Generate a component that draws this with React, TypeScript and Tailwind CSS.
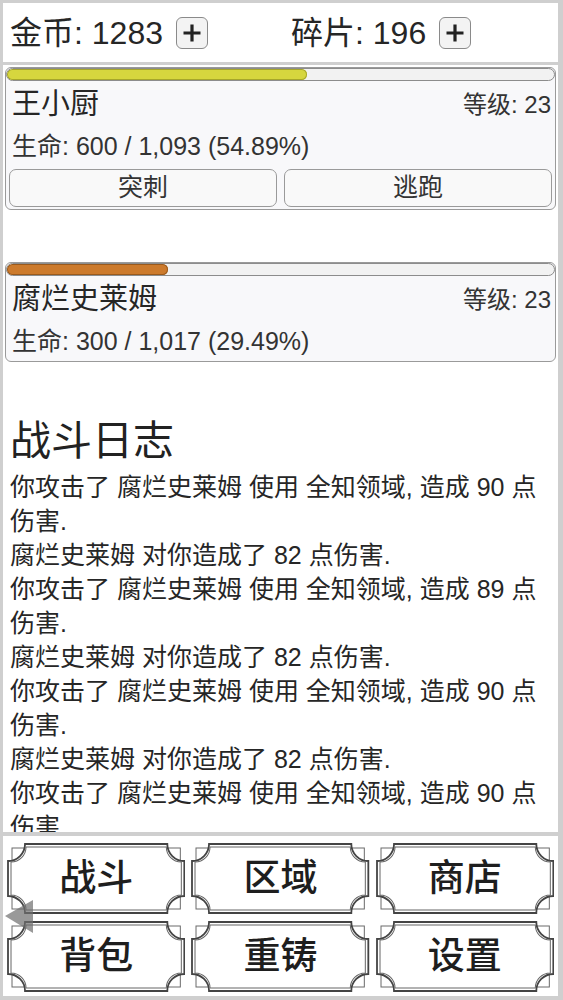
import React from "react";

const FONT = { fontFamily: '"Liberation Sans", "Noto Sans CJK SC", sans-serif' };

function PlusBtn() {
  return (
    <div className="flex h-[32px] w-[32px] items-center justify-center rounded-[6px] border border-[#8a8a8a] bg-[#f3f3f3]">
      <svg width="20" height="20" viewBox="0 0 20 20">
        <path d="M10 1.5 V18.5 M1.5 10 H18.5" stroke="#222" strokeWidth="3.2" />
      </svg>
    </div>
  );
}

function Bar({ pct, fill, edge }: { pct: number; fill: string; edge: string }) {
  return (
    <div className="h-[13px] w-full overflow-hidden rounded-full border border-[#8c8c8c] bg-[#f2f2f2]">
      <div
        className="h-full rounded-full"
        style={{ width: `${pct}%`, background: fill, boxShadow: `inset 0 0 0 1px ${edge}` }}
      />
    </div>
  );
}

function Card({
  name,
  hp,
  pct,
  fill,
  edge,
  buttons,
}: {
  name: string;
  hp: string;
  pct: number;
  fill: string;
  edge: string;
  buttons?: string[];
}) {
  return (
    <div className="mx-[2px] rounded-[6px] border border-[#9a9a9a] bg-[#f8f8fa]">
      <Bar pct={pct} fill={fill} edge={edge} />
      <div className="flex h-[47px] items-center justify-between pl-[6px] pr-[4px]">
        <span className="text-[29px] text-[#262626]">{name}</span>
        <span className="text-[24px] text-[#333]">等级: 23</span>
      </div>
      <div className="flex h-[38px] items-center pl-[6px] text-[25px] text-[#333]">{hp}</div>
      {buttons && (
        <div className="mt-[3px] grid grid-cols-2 gap-[7px] px-[3px] pb-[2px]">
          {buttons.map((b) => (
            <div
              key={b}
              className="flex h-[38px] items-center justify-center rounded-[7px] border border-[#9a9a9a] bg-[#f9f9f9] text-[25px] text-[#333]"
            >
              {b}
            </div>
          ))}
        </div>
      )}
    </div>
  );
}

function scallop(W: number, H: number, d: number, r: number) {
  const x0 = d, y0 = d, x1 = W - d, y1 = H - d;
  return `M ${x0 + r} ${y0} H ${x1 - r} A ${r} ${r} 0 0 0 ${x1} ${y0 + r} V ${y1 - r} A ${r} ${r} 0 0 0 ${x1 - r} ${y1} H ${x0 + r} A ${r} ${r} 0 0 0 ${x0} ${y1 - r} V ${y0 + r} A ${r} ${r} 0 0 0 ${x0 + r} ${y0} Z`;
}

function NavBtn({ label }: { label: string }) {
  const W = 178;
  const H = 71;
  return (
    <div className="relative flex h-[71px] items-center justify-center">
      <svg className="absolute inset-0 h-full w-full" viewBox={`0 0 ${W} ${H}`} preserveAspectRatio="none">
        <rect x="5" y="5" width={W - 10} height={H - 10} fill="none" stroke="#6a6a6a" strokeWidth="1" />
        <path d={scallop(W, H, 1, 17)} fill="#fff" stroke="#444" strokeWidth="1.8" />
        <path d={scallop(W, H, 4, 15)} fill="none" stroke="#666" strokeWidth="1" />
      </svg>
      <span className="relative text-[37px] font-medium text-[#1e1e1e]">{label}</span>
    </div>
  );
}

const LOG: string[] = [
  "你攻击了 腐烂史莱姆 使用 全知领域, 造成 90 点伤害.",
  "腐烂史莱姆 对你造成了 82 点伤害.",
  "你攻击了 腐烂史莱姆 使用 全知领域, 造成 89 点伤害.",
  "腐烂史莱姆 对你造成了 82 点伤害.",
  "你攻击了 腐烂史莱姆 使用 全知领域, 造成 90 点伤害.",
  "腐烂史莱姆 对你造成了 82 点伤害.",
  "你攻击了 腐烂史莱姆 使用 全知领域, 造成 90 点伤害.",
  "腐烂史莱姆 对你造成了 82 点伤害.",
];

export default function App() {
  return (
    <div className="relative h-[1000px] w-[563px] overflow-hidden bg-[#cfcfcf] pl-[3px] pr-[5px] pt-[3px]" style={FONT}>
      {/* header */}
      <div className="flex h-[59px] items-center bg-white pl-[7px] text-[#262626]">
        <div className="flex w-[281px] items-center">
          <span className="text-[32px]">金币: 1283</span>
          <div className="ml-[13px]">
            <PlusBtn />
          </div>
        </div>
        <div className="flex items-center">
          <span className="text-[32px]">碎片: 196</span>
          <div className="ml-[13px]">
            <PlusBtn />
          </div>
        </div>
      </div>

      {/* main */}
      <div className="mt-[3px] h-[767px] overflow-hidden bg-white pt-[2px]">
        <Card
          name="王小厨"
          hp="生命: 600 / 1,093 (54.89%)"
          pct={54.89}
          fill="#d6d63e"
          edge="#a6a62a"
          buttons={["突刺", "逃跑"]}
        />
        <div className="h-[52px]" />
        <Card name="腐烂史莱姆" hp="生命: 300 / 1,017 (29.49%)" pct={29.49} fill="#cc7a2c" edge="#9a5a1c" />
        <div className="mt-[55px] pl-[7px] pr-[10px]">
          <div className="h-[48px] text-[41px] leading-[48px] text-[#222]">战斗日志</div>
          <div className="mt-[5px] text-[25px] leading-[34px] text-[#262626]">
            {LOG.map((l, i) => (
              <div key={i}>{l}</div>
            ))}
          </div>
        </div>
      </div>

      {/* nav */}
      <div className="mt-[4px] grid h-[160px] grid-cols-3 gap-x-[6px] gap-y-[7px] bg-white px-[4px] pt-[7px] pb-[4px]">
        {["战斗", "区域", "商店", "背包", "重铸", "设置"].map((l) => (
          <NavBtn key={l} label={l} />
        ))}
      </div>

      {/* floating arrow */}
      <svg className="absolute left-[4px] top-[898px] opacity-70" width="32" height="38" viewBox="0 0 32 38">
        <polygon points="1,18 29,2 29,35" fill="#6e6e6e" />
      </svg>
    </div>
  );
}
